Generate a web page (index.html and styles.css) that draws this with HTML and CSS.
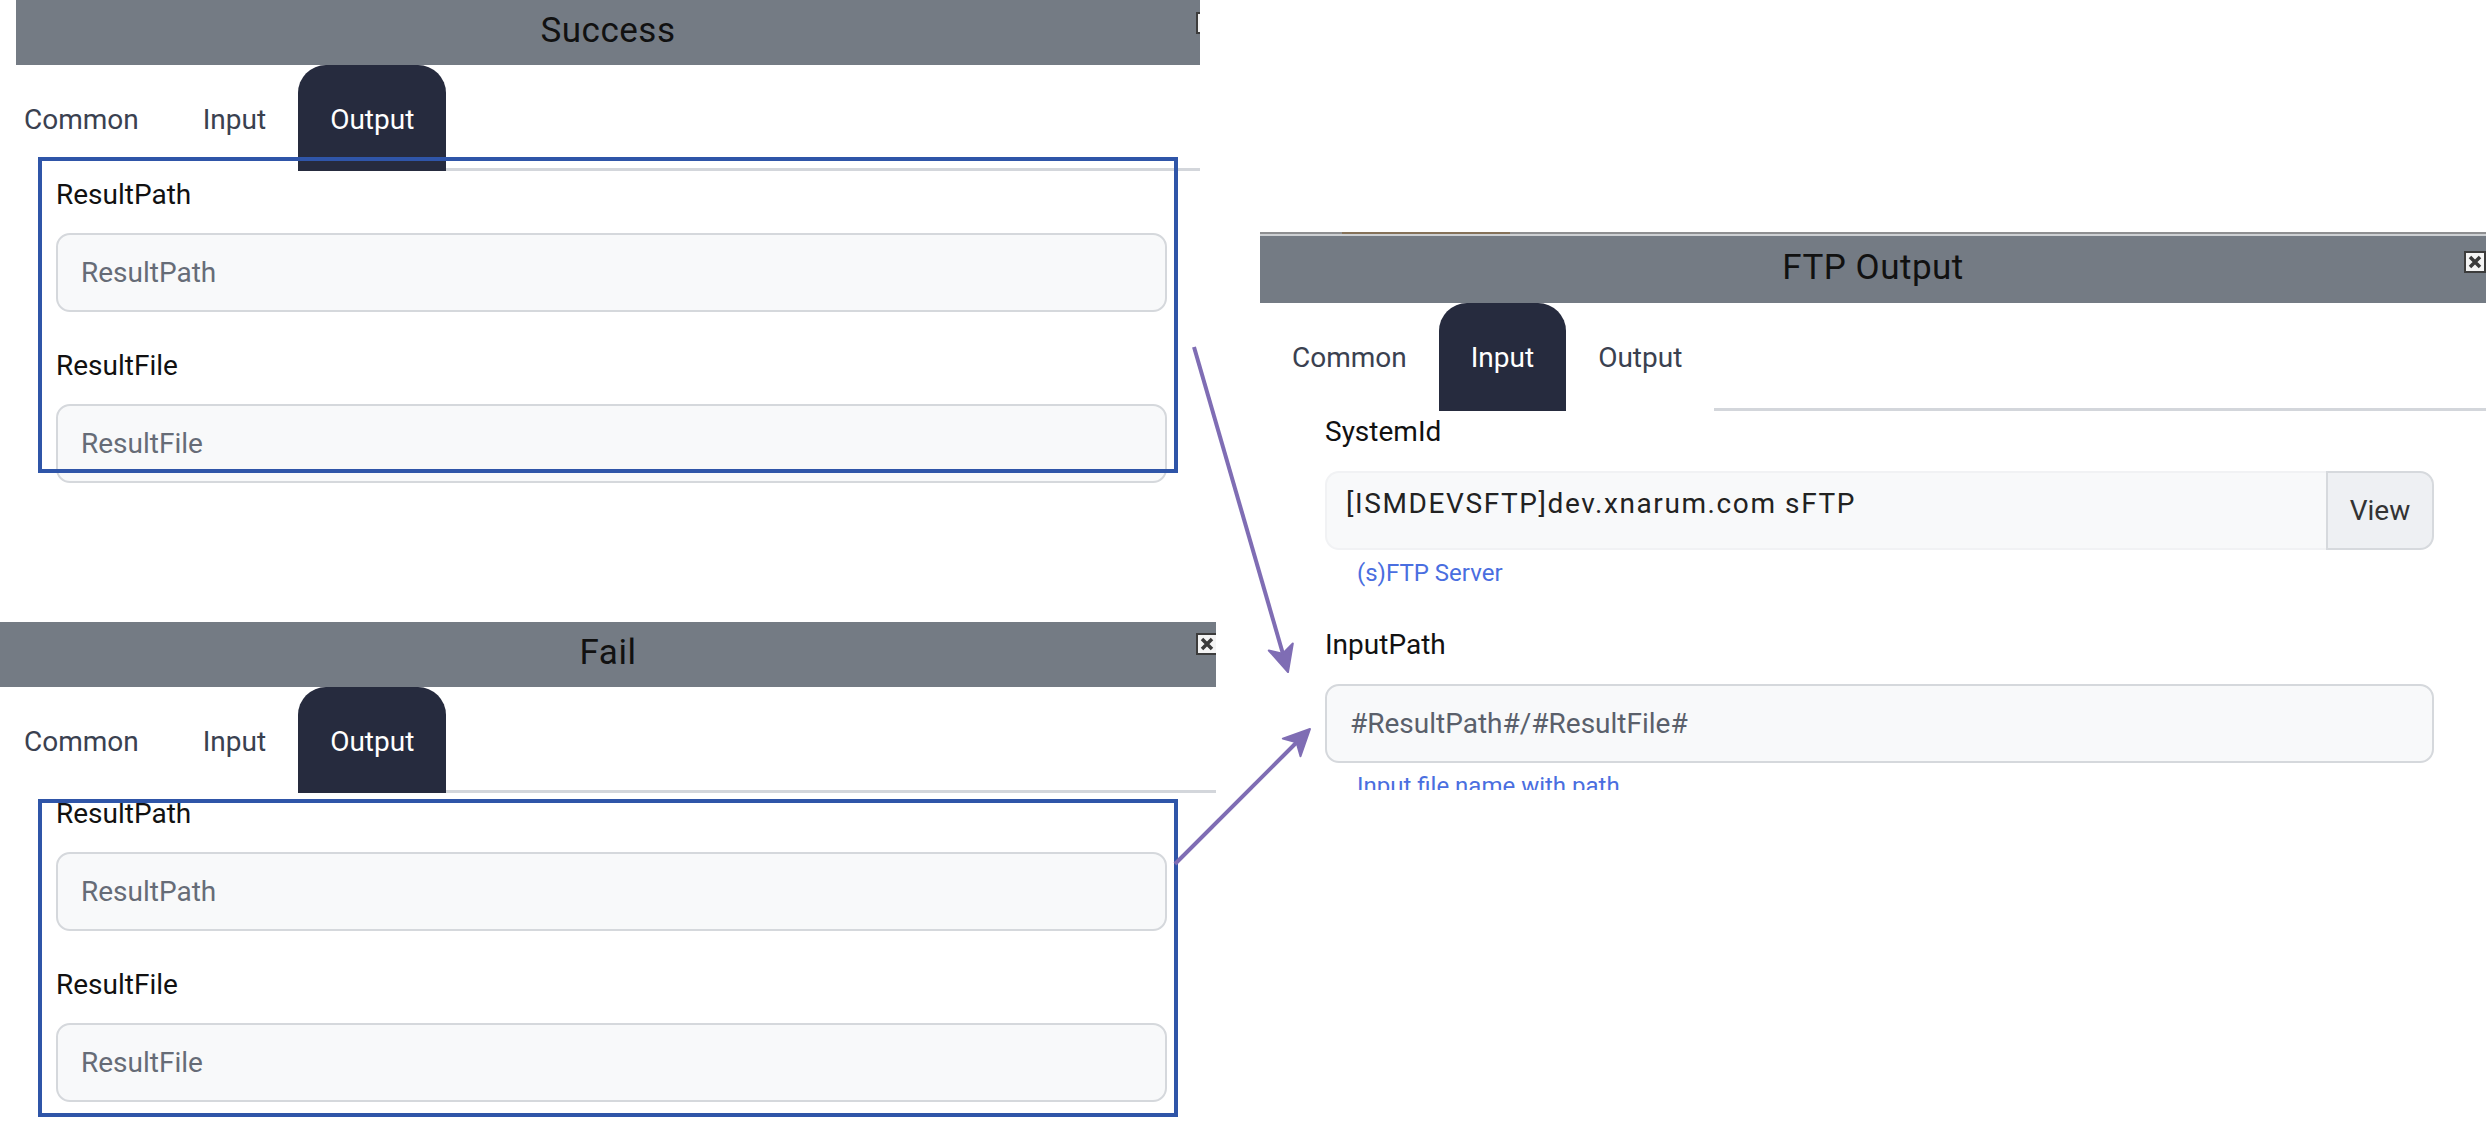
FILE: index.html
```html
<!DOCTYPE html>
<html>
<head>
  <meta charset="utf-8">
  <link rel="stylesheet" href="styles.css">
</head>
<body>
<div class="page">

  <div class="left-col">
    <!-- Success node -->
    <div class="panel panel-success">
      <div class="panel-header">
        <span class="panel-title">Success</span>
        <span class="close-btn">
          <svg width="22" height="22" viewBox="0 0 22 22"><rect x="1" y="1" width="20" height="20" fill="#f4f4f4" stroke="#3c3c3c" stroke-width="2"/><path d="M6 6 L16 16 M16 6 L6 16" stroke="#3a3a3a" stroke-width="3.5"/></svg>
        </span>
      </div>
      <div class="tabs">
        <a class="tab">Common</a>
        <a class="tab">Input</a>
        <a class="tab active">Output</a>
      </div>
      <div class="panel-body">
        <label class="field-label">ResultPath</label>
        <input class="field-input" placeholder="ResultPath">
        <label class="field-label">ResultFile</label>
        <input class="field-input" placeholder="ResultFile">
      </div>
      <div class="mark-box"></div>
    </div>

    <!-- Fail node -->
    <div class="panel panel-fail">
      <div class="panel-header">
        <span class="panel-title">Fail</span>
        <span class="close-btn">
          <svg width="22" height="22" viewBox="0 0 22 22"><rect x="1" y="1" width="20" height="20" fill="#f4f4f4" stroke="#3c3c3c" stroke-width="2"/><path d="M6 6 L16 16 M16 6 L6 16" stroke="#3a3a3a" stroke-width="3.5"/></svg>
        </span>
      </div>
      <div class="tabs">
        <a class="tab">Common</a>
        <a class="tab">Input</a>
        <a class="tab active">Output</a>
      </div>
      <div class="panel-body">
        <label class="field-label">ResultPath</label>
        <input class="field-input" placeholder="ResultPath">
        <label class="field-label">ResultFile</label>
        <input class="field-input" placeholder="ResultFile">
      </div>
      <div class="mark-box"></div>
    </div>
  </div>

  <div class="right-col">
    <div class="strip"><span class="strip-accent"></span></div>
    <div class="strip-light"></div>
    <!-- FTP Output node -->
    <div class="panel panel-ftp">
      <div class="panel-header">
        <span class="panel-title">FTP Output</span>
        <span class="close-btn">
          <svg width="22" height="22" viewBox="0 0 22 22"><rect x="1" y="1" width="20" height="20" fill="#f4f4f4" stroke="#3c3c3c" stroke-width="2"/><path d="M6 6 L16 16 M16 6 L6 16" stroke="#3a3a3a" stroke-width="3.5"/></svg>
        </span>
      </div>
      <div class="tabs">
        <a class="tab">Common</a>
        <a class="tab active">Input</a>
        <a class="tab">Output</a>
      </div>
      <div class="panel-body">
        <label class="field-label">SystemId</label>
        <div class="input-group">
          <div class="select-box">[ISMDEVSFTP]dev.xnarum.com sFTP</div>
          <div class="view-btn">View</div>
        </div>
        <div class="field-help">(s)FTP Server</div>
        <label class="field-label">InputPath</label>
        <input class="field-input" value="#ResultPath#/#ResultFile#">
        <div class="field-help">Input file name with path</div>
      </div>
    </div>
  </div>

  <svg class="arrows" width="2486" height="1130" viewBox="0 0 2486 1130">
    <line x1="1194" y1="347" x2="1283" y2="654" stroke="#7f6db4" stroke-width="4"/>
    <path d="M1288 672 L1268.8 650.5 L1282.7 653.7 L1292.8 643.5 Z" fill="#7f6db4" stroke="#7f6db4" stroke-width="2" stroke-linejoin="round"/>
    <line x1="1175" y1="864" x2="1297" y2="742" stroke="#7f6db4" stroke-width="4"/>
    <path d="M1310 729 L1300.5 756.2 L1296.6 742.4 L1282.8 738.6 Z" fill="#7f6db4" stroke="#7f6db4" stroke-width="2" stroke-linejoin="round"/>
  </svg>

</div>
</body>
</html>
```

FILE: styles.css
```css
body {
  margin: 0;
  padding: 0;
  font-family: Roboto, "Liberation Sans", sans-serif;
  background: #fff;
  overflow: hidden;
}

.page {
  position: relative;
  display: flex;
  width: 2486px;
  height: 1130px;
  overflow: hidden;
}

.left-col {
  width: 1216px;
  flex-shrink: 0;
  display: flex;
  flex-direction: column;
}

.right-col {
  flex: 1;
  min-width: 0;
  padding-left: 44px;
  padding-top: 232px;
}

.panel {
  position: relative;
  overflow: hidden;
  background: #fff;
}

.panel-success {
  margin-left: 16px;
  width: 1184px;
  height: 490px;
}

.panel-fail {
  margin-top: 132px;
  width: 1216px;
  height: 508px;
}

.panel-ftp {
  height: 554px;
}

/* top edge of the FTP node */
.strip {
  display: flex;
  height: 2px;
  background: #8e8f91;
}

.strip-accent {
  margin-left: 82px;
  width: 168px;
  background: #857259;
}

.strip-light {
  height: 2px;
  background: #cdd0d3;
}

.panel-header {
  position: relative;
  box-sizing: border-box;
  height: 65px;
  padding-bottom: 4px;
  background: #747b84;
  display: flex;
  align-items: center;
  justify-content: center;
}

.panel-ftp .panel-header {
  height: 67px;
}

.panel-title {
  font-size: 35px;
  color: #111;
  letter-spacing: 0.5px;
}

.close-btn {
  position: absolute;
  top: 12px;
  width: 22px;
  height: 22px;
  line-height: 0;
}

.panel-success .close-btn { left: 1180px; }
.panel-fail .close-btn { left: 1196px; top: 11px; }
.panel-ftp .close-btn { left: 1204px; top: 15px; }

.tabs {
  display: flex;
  border-bottom: 3px solid #d3d6db;
}

.tab {
  font-size: 28px;
  line-height: 42px;
  padding: 34px 32px 30px;
  color: #3a4150;
  background: #fff;
  margin-bottom: -3px;
  cursor: pointer;
}

.tab.active {
  background: #262b3e;
  color: #fff;
  border-radius: 28px 28px 0 0;
}

.panel-success .tab:first-child { padding-left: 8px; }
.panel-fail .tab:first-child { padding-left: 24px; }
.panel-ftp .tab { padding-top: 34px; padding-bottom: 32px; }

.panel-success .panel-body { padding: 3px 33px 0 40px; }
.panel-fail .panel-body { padding: 0 49px 0 56px; }
.panel-ftp .panel-body { padding: 0 52px 0 65px; }

.field-label {
  display: block;
  font-size: 28px;
  line-height: 42px;
  color: #111;
  margin-bottom: 17px;
}

.panel-ftp .field-label {
  margin-bottom: 18px;
}

.field-input {
  display: block;
  width: 100%;
  box-sizing: border-box;
  height: 79px;
  border: 2px solid #d5d8dc;
  border-radius: 14px;
  background: #f8f9fa;
  padding: 0 22px 0 23px;
  font-family: Roboto, "Liberation Sans", sans-serif;
  font-size: 28px;
  color: #5a606b;
  margin: 0 0 33px 0;
  outline: none;
}

.field-input::placeholder {
  color: #666c77;
  opacity: 1;
}

.panel-ftp .field-input {
  margin-bottom: 0;
}

.input-group {
  display: flex;
  height: 79px;
}

.select-box {
  flex: 1;
  display: flex;
  align-items: center;
  padding: 0 0 14px 19px;
  background: #f8f9fa;
  border: 2px solid #f1f2f4;
  border-right: none;
  border-radius: 14px 0 0 14px;
  font-size: 28px;
  letter-spacing: 1.6px;
  color: #222;
}

.view-btn {
  width: 108px;
  box-sizing: border-box;
  background: #eef0f3;
  border: 2px solid #d6d9dd;
  border-radius: 0 14px 14px 0;
  font-size: 28px;
  color: #333;
  display: flex;
  align-items: center;
  justify-content: center;
}

.field-help {
  font-size: 24px;
  line-height: 36px;
  color: #4a6ee0;
  margin: 5px 0 33px 32px;
}

/* annotation overlays */
.mark-box {
  position: absolute;
  box-sizing: border-box;
  border: 4px solid #2f55a8;
  width: 1140px;
  pointer-events: none;
}

.panel-success .mark-box { left: 22px; top: 157px; height: 316px; }
.panel-fail .mark-box { left: 38px; top: 177px; height: 318px; }

.arrows {
  position: absolute;
  top: 0;
  left: 0;
  pointer-events: none;
}
```
